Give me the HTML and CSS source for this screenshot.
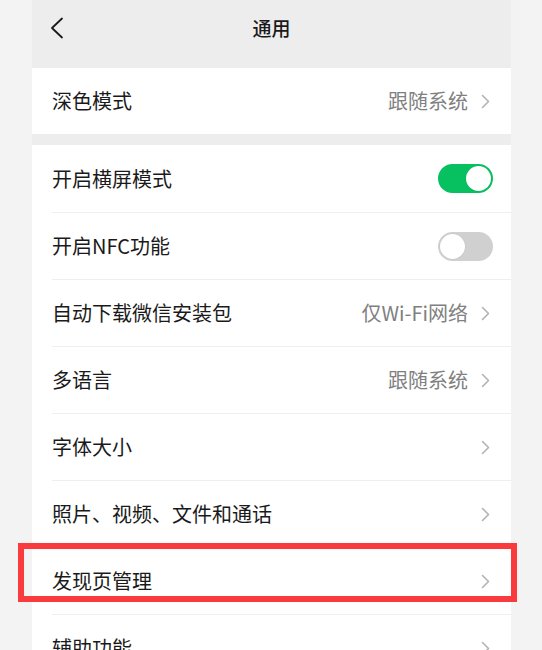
FILE: index.html
```html
<!DOCTYPE html>
<html lang="zh-CN">
<head>
<meta charset="utf-8">
<title>通用</title>
<link rel="stylesheet" href="styles.css">
</head>
<body>
<div class="page">
  <header class="topbar">
    <span class="back">
      <svg width="14" height="22" viewBox="0 0 14 22"><polyline points="12,1.5 2,11 12,20.5" fill="none" stroke="#1a1a1a" stroke-width="1.8" stroke-linecap="round" stroke-linejoin="round"/></svg>
    </span>
    <h1 class="title">通用</h1>
  </header>

  <section class="card card-first">
    <div class="row">
      <div class="row-body">
        <span class="label">深色模式</span>
        <span class="value">跟随系统</span>
        <svg class="chev" width="9" height="15" viewBox="0 0 9 15"><polyline points="1.5,1.5 7.5,7.5 1.5,13.5" fill="none" stroke="#b3b3b3" stroke-width="1.6" stroke-linecap="round" stroke-linejoin="round"/></svg>
      </div>
    </div>
  </section>

  <section class="card">
    <div class="row">
      <div class="row-body">
        <span class="label">开启横屏模式</span>
        <span class="switch on"><span class="knob"></span></span>
      </div>
    </div>
    <div class="row">
      <div class="row-body">
        <span class="label">开启NFC功能</span>
        <span class="switch"><span class="knob"></span></span>
      </div>
    </div>
    <div class="row">
      <div class="row-body">
        <span class="label">自动下载微信安装包</span>
        <span class="value">仅Wi-Fi网络</span>
        <svg class="chev" width="9" height="15" viewBox="0 0 9 15"><polyline points="1.5,1.5 7.5,7.5 1.5,13.5" fill="none" stroke="#b3b3b3" stroke-width="1.6" stroke-linecap="round" stroke-linejoin="round"/></svg>
      </div>
    </div>
    <div class="row">
      <div class="row-body">
        <span class="label">多语言</span>
        <span class="value">跟随系统</span>
        <svg class="chev" width="9" height="15" viewBox="0 0 9 15"><polyline points="1.5,1.5 7.5,7.5 1.5,13.5" fill="none" stroke="#b3b3b3" stroke-width="1.6" stroke-linecap="round" stroke-linejoin="round"/></svg>
      </div>
    </div>
    <div class="row">
      <div class="row-body">
        <span class="label">字体大小</span>
        <svg class="chev" width="9" height="15" viewBox="0 0 9 15"><polyline points="1.5,1.5 7.5,7.5 1.5,13.5" fill="none" stroke="#b3b3b3" stroke-width="1.6" stroke-linecap="round" stroke-linejoin="round"/></svg>
      </div>
    </div>
    <div class="row">
      <div class="row-body">
        <span class="label">照片、视频、文件和通话</span>
        <svg class="chev" width="9" height="15" viewBox="0 0 9 15"><polyline points="1.5,1.5 7.5,7.5 1.5,13.5" fill="none" stroke="#b3b3b3" stroke-width="1.6" stroke-linecap="round" stroke-linejoin="round"/></svg>
      </div>
    </div>
    <div class="row row-marked">
      <div class="row-body">
        <span class="label">发现页管理</span>
        <svg class="chev" width="9" height="15" viewBox="0 0 9 15"><polyline points="1.5,1.5 7.5,7.5 1.5,13.5" fill="none" stroke="#b3b3b3" stroke-width="1.6" stroke-linecap="round" stroke-linejoin="round"/></svg>
      </div>
      <span class="highlight"></span>
    </div>
    <div class="row">
      <div class="row-body">
        <span class="label">辅助功能</span>
        <svg class="chev" width="9" height="15" viewBox="0 0 9 15"><polyline points="1.5,1.5 7.5,7.5 1.5,13.5" fill="none" stroke="#b3b3b3" stroke-width="1.6" stroke-linecap="round" stroke-linejoin="round"/></svg>
      </div>
    </div>
  </section>
</div>
</body>
</html>
```

FILE: styles.css
```css
html, body {
  margin: 0;
  padding: 0;
}
body {
  background: #f3f3f3;
  font-family: "Noto Sans CJK SC", "Noto Sans", sans-serif;
  color: #1a1a1a;
  overflow: hidden;
}
.page {
  width: 479px;
  margin-left: 32px;
  background: #ededed;
  min-height: 760px;
}
.topbar {
  height: 68px;
  display: flex;
  align-items: center;
  justify-content: center;
  position: relative;
}
.back {
  position: absolute;
  left: 18px;
  top: 17px;
  display: flex;
}
.title {
  margin: 0;
  font-size: 19px;
  font-weight: 500;
  line-height: 1;
  margin-top: -13px;
  color: #1a1a1a;
}
.card {
  background: #fff;
  margin-bottom: 11px;
}
.card-first .row {
  height: 66px;
}
.row {
  height: 67px;
  padding-left: 20px;
  position: relative;
  box-sizing: border-box;
}
.row-body {
  height: 100%;
  display: flex;
  align-items: center;
  padding-right: 21px;
  box-sizing: border-box;
}
.row + .row .row-body {
  border-top: 1px solid #efefef;
}
.label {
  flex: 1;
  font-size: 20px;
  line-height: 1;
  color: #1a1a1a;
}
.value {
  font-size: 20px;
  line-height: 1;
  color: #808080;
  margin-right: 13px;
}
.chev {
  display: block;
}
.switch {
  width: 55px;
  height: 29px;
  border-radius: 15px;
  background: #d0d0d0;
  position: relative;
  margin-right: -3px;
  box-sizing: border-box;
  flex-shrink: 0;
}
.switch .knob {
  position: absolute;
  top: 2px;
  left: 2px;
  width: 25px;
  height: 25px;
  border-radius: 50%;
  background: #fff;
  box-shadow: 0 0 0 0.5px rgba(0,0,0,0.06);
}
.switch.on {
  background: #07c160;
}
.switch.on .knob {
  left: 28px;
}
.highlight {
  position: absolute;
  left: -14px;
  top: -4px;
  width: 499px;
  height: 59px;
  border: 6px solid #fa3b3e;
  box-sizing: border-box;
  pointer-events: none;
}
```
